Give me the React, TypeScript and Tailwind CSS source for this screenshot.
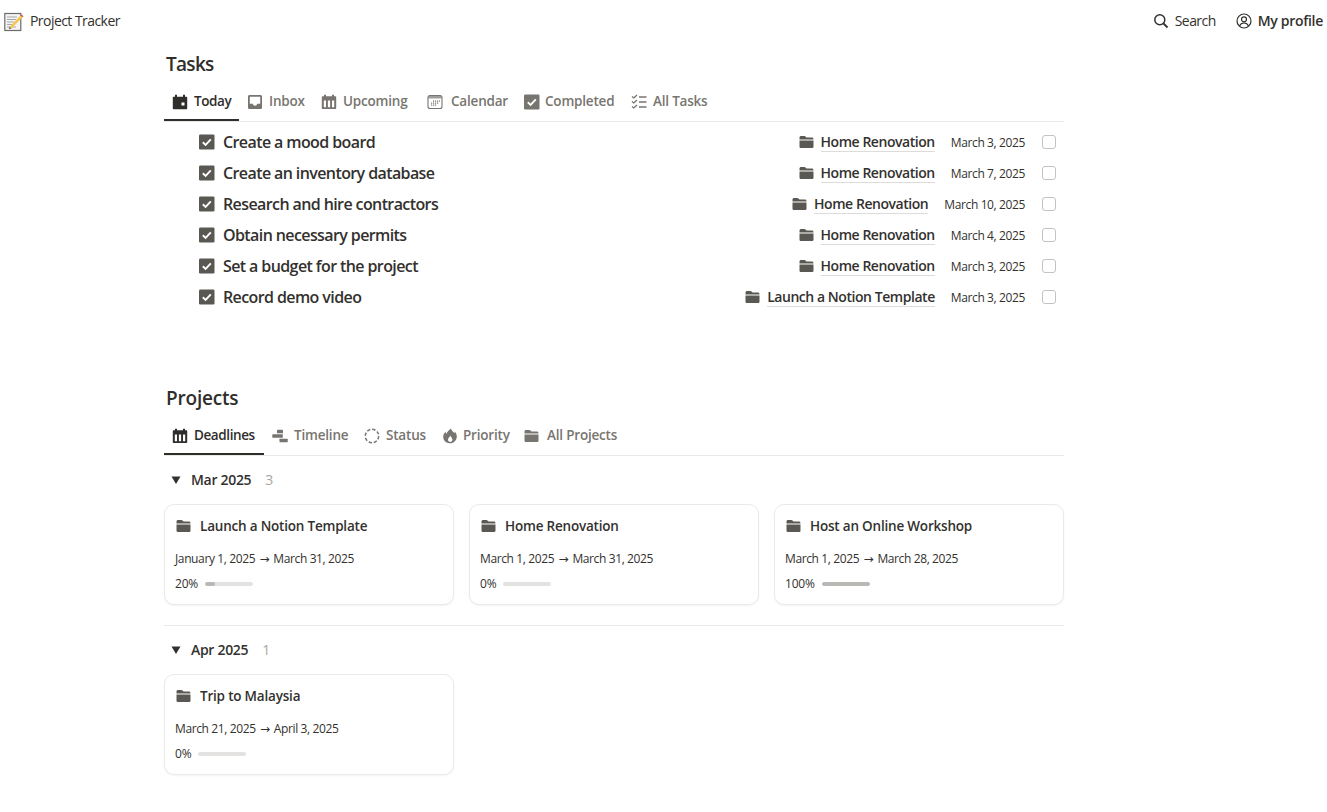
import React from "react";

const Folder = ({ c = "#5a5853", s = 16 }: { c?: string; s?: number }) => (
  <svg width={s} height={s} viewBox="1 0 15 16" className="shrink-0">
    <path d="M1 3.6C1 2.7 1.7 2 2.6 2h3.2c.5 0 .9.2 1.2.5L8 3.6h5.4c.9 0 1.6.7 1.6 1.6V5.6H1z" fill={c} />
    <path d="M1 6.6h14v5.9c0 .9-.7 1.6-1.6 1.6H2.6c-.9 0-1.6-.7-1.6-1.6z" fill={c} />
  </svg>
);

const CheckBoxIcon = ({ c = "#5a5853", s = 16 }: { c?: string; s?: number }) => (
  <svg width={s} height={s} viewBox="0 0 16 16" className="shrink-0">
    <rect x="0" y="0.500" width="15.500" height="15" rx="1.200" fill={c} />
    <path d="M3.800 8.300l2.800 2.600L11.800 5.400" fill="none" stroke="#fff" strokeWidth="1.900" />
  </svg>
);

const CalSolid = ({ c }: { c: string }) => (
  <svg width="16" height="16" viewBox="0 0 16 16" className="shrink-0">
    <path d="M3 .8h2v2h6v-2h2v2h1.200c.6 0 1 .4 1 1v10.400c0 .6-.4 1-1 1H1.800c-.6 0-1-.4-1-1V3.800c0-.6.4-1 1-1H3z" fill={c} />
    <rect x="9.500" y="8.500" width="3" height="3" fill="#fff" />
  </svg>
);

const Inbox = ({ c }: { c: string }) => (
  <svg width="16" height="16" viewBox="0 0 16 16" className="shrink-0">
    <path fillRule="evenodd" d="M2.600 1h10.800c.9 0 1.600.7 1.600 1.600v10.800c0 .9-.7 1.600-1.600 1.600H2.600c-.9 0-1.600-.7-1.600-1.600V2.600C1 1.700 1.700 1 2.600 1zM2.800 2.800v6.900h3c.2 1.200 1.100 2 2.200 2s2-.8 2.200-2h3V2.800z" fill={c} />
  </svg>
);

const CalTable = ({ c }: { c: string }) => (
  <svg width="16" height="16" viewBox="0 0 16 16" className="shrink-0">
    <path fillRule="evenodd" d="M3 .8h2v1.500h6V.8h2v1.500h1.200c.6 0 1 .4 1 1V14c0 .6-.4 1-1 1H1.800c-.6 0-1-.4-1-1V3.300c0-.6.4-1 1-1H3zM2.800 6.500V13.200H5V6.500zM6.900 6.500V13.200h2.200V6.500zM11 6.500V13.200h2.200V6.500z" fill={c} />
  </svg>
);

const CalFrame = ({ c }: { c: string }) => (
  <svg width="16" height="16" viewBox="0 0 16 16" className="shrink-0">
    <rect x="1" y="1.500" width="14" height="13" rx="2" fill="#fff" stroke={c} strokeWidth="1.100" />
    <rect x="1.500" y="2" width="13" height="2.500" fill={c} opacity=".7" />
    <g fill={c}>
      <rect x="6" y="6.500" width="1.200" height="1.200" /><rect x="8" y="6.500" width="1.200" height="1.200" /><rect x="10" y="6.500" width="1.200" height="1.200" /><rect x="12" y="6.500" width="1" height="1.200" />
      <rect x="4" y="8.500" width="1.200" height="1.200" /><rect x="6" y="8.500" width="1.200" height="1.200" /><rect x="8" y="8.500" width="1.200" height="1.200" /><rect x="10" y="8.500" width="1.200" height="1.200" />
      <rect x="4" y="10.500" width="1.200" height="1.200" /><rect x="6" y="10.500" width="1.200" height="1.200" /><rect x="8" y="10.500" width="1.200" height="1.200" />
    </g>
  </svg>
);

const Checklist = ({ c }: { c: string }) => (
  <svg width="16" height="16" viewBox="0 0 16 16" className="shrink-0" fill="none" stroke={c}>
    <path d="M1 2.500l1.800 1.500L6 1M1 7.500l1.800 1.500L6 6M1 12.500l1.800 1.500L6 11" strokeWidth="1.300" />
    <path d="M8 3h7.500M8 8h7.500M8 13h7.500" strokeWidth="1.500" />
  </svg>
);

const Gantt = ({ c }: { c: string }) => (
  <svg width="16" height="16" viewBox="0 0 16 16" className="shrink-0" fill={c}>
    <rect x="5" y="1.800" width="6" height="3.500" rx=".5" />
    <rect x="0.300" y="6.300" width="10.500" height="3.500" rx=".5" />
    <rect x="7.500" y="10.800" width="8.200" height="3.500" rx=".5" />
  </svg>
);

const DashedCircle = ({ c }: { c: string }) => (
  <svg width="16" height="16" viewBox="0 0 16 16" className="shrink-0">
    <circle cx="8" cy="8" r="6.700" fill="none" stroke={c} strokeWidth="1.500" strokeDasharray="3.400 1.860" />
  </svg>
);

const Fire = ({ c }: { c: string }) => (
  <svg width="16" height="16" viewBox="0 0 16 16" className="shrink-0">
    <path fillRule="evenodd" d="M9 .5c.5 2.200 2 3 3.300 4.700.2-.6.300-1.100.2-1.800 1.500 1.300 2.300 3.200 2.300 5.100 0 3.900-3 6.800-6.800 6.800S1.200 12.500 1.200 8.800c0-2.300 1.200-3.900 2.500-5 0 1 .2 1.700.7 2.300C5 3.800 7 2 9 .5zM8.300 7.500c-.2 1.300-2.300 2.300-2.300 4.200 0 1.300 1 2.200 2.200 2.200s2.200-1 2.200-2.200c0-1.800-1.600-2.800-2.100-4.200z" fill={c} />
  </svg>
);

const Memo = () => (
  <svg width="20" height="20" viewBox="0 0 20 20" className="shrink-0">
    <rect x="0.800" y="1.500" width="16" height="17" fill="#f4f4f4" stroke="#6b6b6b" strokeWidth="1.200" />
    <path d="M3 5h10M3 7.500h9M3 10h7M3 12.500h5M3 15h9" stroke="#a8a8a8" strokeWidth="1" />
    <path d="M5.500 15L16.500 3.500l2 1.800L7.500 16.500z" fill="#f6c64e" />
    <path d="M16.500 3.500l1-1 2 1.800-1 1z" fill="#d0524a" />
    <path d="M5.500 15l-.6 2 2.600-.5z" fill="#555" />
  </svg>
);

const Tab = ({ icon, label, active, w, gap = "gap-1.5" }: { icon: React.ReactNode; label: string; active?: boolean; w: string; gap?: string }) => (
  <div className={`flex h-full items-center border-b-2 px-2 pb-[1px] ${gap} ${w} ${active ? "border-[#2f2e2b] text-[#2f2e2b]" : "border-transparent text-[#787570]"}`}>
    {icon}
    <span className={`whitespace-nowrap text-[13.500px] font-semibold leading-none ${active ? "tracking-[-0.4px]" : "tracking-[-0.2px]"}`}>{label}</span>
  </div>
);

const tasks = [
  ["Create a mood board", "Home Renovation", "March 3, 2025"],
  ["Create an inventory database", "Home Renovation", "March 7, 2025"],
  ["Research and hire contractors", "Home Renovation", "March 10, 2025"],
  ["Obtain necessary permits", "Home Renovation", "March 4, 2025"],
  ["Set a budget for the project", "Home Renovation", "March 3, 2025"],
  ["Record demo video", "Launch a Notion Template", "March 3, 2025"],
];

const Card = ({ title, from, to, pct, fill }: { title: string; from: string; to: string; pct: string; fill: number }) => (
  <div className="flex h-[101px] w-[290px] flex-col rounded-[10px] border border-[#ebeae8] bg-white pl-[10px] shadow-[0_1px_2px_rgba(0,0,0,0.05)]">
    <div className="mt-[11px] flex h-5 items-center gap-2 pl-[1px]">
      <Folder s={16} />
      <span className="text-[13.500px] font-semibold tracking-[-0.2px] text-[#33312e]">{title}</span>
    </div>
    <div className="mt-[14px] h-[18px] whitespace-nowrap text-[12px] leading-[18px] tracking-[-0.38px] text-[#33312e]">
      {from} <span className="mx-[1.500px]" style={{ fontFamily: '"DejaVu Sans", sans-serif' }}>→</span> {to}
    </div>
    <div className="mt-[7px] flex h-[18px] items-center gap-[7px] text-[12px] tracking-[-0.2px] text-[#33312e]">
      <span>{pct}</span>
      <div className="h-1 w-12 overflow-hidden rounded-full bg-[#e3e2e0]">
        <div className="h-full rounded-full bg-[#b9b8b5]" style={{ width: `${fill}%` }} />
      </div>
    </div>
  </div>
);

const GroupHead = ({ label, n }: { label: string; n: string }) => (
  <div className="flex h-6 items-center pl-[7px] text-[14px]">
    <svg width="10" height="10" viewBox="0 0 10 10" className="mr-[10px] shrink-0"><path d="M0.500 1.500h9L5 9z" fill="#33312e" /></svg>
    <span className="pb-[1px] font-semibold tracking-[-0.3px] text-[#33312e]">{label}</span>
    <span className="ml-[14px] pb-[1px] text-[14px] text-[#a8a6a2]">{n}</span>
  </div>
);

export default function App() {
  const font = { fontFamily: '"Open Sans", "Noto Sans", sans-serif' };
  return (
    <div className="h-[812px] w-[1327px] overflow-hidden bg-white text-[#33312e]" style={font}>
      <header className="flex h-[43px] items-center justify-between pl-[4px] pr-[4px]">
        <div className="flex items-center gap-[6px]">
          <Memo />
          <span className="pb-[2px] text-[14px] tracking-[-0.55px] text-[#33312e]">Project Tracker</span>
        </div>
        <div className="flex items-center gap-5 text-[14px]">
          <div className="flex items-center gap-[6px]">
            <svg width="16" height="16" viewBox="0 0 16 16" fill="none" stroke="#33312e" strokeWidth="1.500" className="-mt-[2px] shrink-0"><circle cx="6.800" cy="6.800" r="5" /><path d="M10.500 10.500l4 4" strokeWidth="1.800" /></svg>
            <span className="pb-[2px] tracking-[-0.55px]">Search</span>
          </div>
          <div className="flex items-center gap-[6px]">
            <svg width="16" height="16" viewBox="0 0 16 16" fill="none" stroke="#33312e" strokeWidth="1.200" className="-mt-[2px] shrink-0"><circle cx="8" cy="8" r="7" /><circle cx="8" cy="6.300" r="2.500" /><path d="M3.500 13c.8-2 2.500-3 4.500-3s3.700 1 4.500 3" /></svg>
            <span className="pb-[2px] font-semibold tracking-[-0.3px]">My profile</span>
          </div>
        </div>
      </header>

      <main className="ml-[164px] w-[900px]">
        <h2 className="h-[42px] pl-[2px] pt-[7px] text-[19px] font-semibold leading-[28px] tracking-[-0.7px] text-[#2f2e2b]">Tasks</h2>
        <nav className="flex h-[37px] items-stretch border-b border-[#e9e9e7]">
          <Tab active w="w-[75px]" label="Today" icon={<CalSolid c="#2f2e2b" />} />
          <Tab w="w-[74px]" label="Inbox" icon={<Inbox c="#787570" />} />
          <Tab w="w-[106px]" label="Upcoming" icon={<CalTable c="#787570" />} />
          <Tab w="w-[97px]" gap="gap-2" label="Calendar" icon={<CalFrame c="#787570" />} />
          <Tab w="w-[107px]" gap="gap-[5px]" label="Completed" icon={<CheckBoxIcon c="#787570" s={16} />} />
          <Tab w="w-[92px]" label="All Tasks" icon={<Checklist c="#787570" />} />
        </nav>

        <section className="h-[255px] pt-[4px]">
          {tasks.map(([t, p, d]) => (
            <div key={t} className="flex h-[31px] items-center pl-[35px] pr-[8px]">
              <CheckBoxIcon />
              <span className="ml-[8px] text-[16px] font-semibold tracking-[-0.6px] text-[#33312e]">{t}</span>
              <div className="ml-auto flex items-center gap-[6px]">
                <Folder s={16} />
                <span className="mt-[2px] border-b border-[#dddcda] text-[14px] font-semibold leading-[18px] tracking-[-0.45px] text-[#33312e]">{p}</span>
              </div>
              <span className="ml-4 mt-[3px] text-[12px] tracking-[-0.38px] text-[#33312e]">{d}</span>
              <div className="ml-[17px] h-[14px] w-[14px] rounded-[3px] border border-[#c4c3c0]" />
            </div>
          ))}
        </section>

        <h2 className="h-[42px] pl-[2px] pt-[7px] text-[19px] font-semibold leading-[28px] tracking-[-0.2px] text-[#2f2e2b]">Projects</h2>
        <nav className="flex h-[37px] items-stretch border-b border-[#e9e9e7]">
          <Tab active w="w-[100px]" label="Deadlines" icon={<CalTable c="#2f2e2b" />} />
          <Tab w="w-[92px]" label="Timeline" icon={<Gantt c="#787570" />} />
          <Tab w="w-[78px]" label="Status" icon={<DashedCircle c="#787570" />} />
          <Tab w="w-[82px]" gap="gap-[5px]" label="Priority" icon={<Fire c="#787570" />} />
          <Tab w="w-[110px]" gap="gap-[7px]" label="All Projects" icon={<Folder c="#787570" />} />
        </nav>

        <div className="mt-[12px]"><GroupHead label="Mar 2025" n="3" /></div>
        <div className="mt-[12px] flex gap-[15px]">
          <Card title="Launch a Notion Template" from="January 1, 2025" to="March 31, 2025" pct="20%" fill={20} />
          <Card title="Home Renovation" from="March 1, 2025" to="March 31, 2025" pct="0%" fill={0} />
          <Card title="Host an Online Workshop" from="March 1, 2025" to="March 28, 2025" pct="100%" fill={100} />
        </div>
        <div className="mt-[20px] border-t border-[#e9e9e7]" />
        <div className="mt-[12px]"><GroupHead label="Apr 2025" n="1" /></div>
        <div className="mt-[12px] flex">
          <Card title="Trip to Malaysia" from="March 21, 2025" to="April 3, 2025" pct="0%" fill={0} />
        </div>
      </main>
    </div>
  );
}
